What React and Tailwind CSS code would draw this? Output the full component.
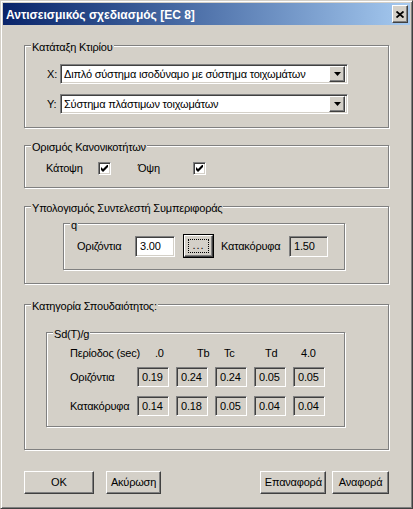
import React from 'react'

const sunken =
  'border border-t-[#808080] border-l-[#808080] border-b-white border-r-white shadow-[inset_1px_1px_0_#404040,inset_-1px_-1px_0_#d4d0c8]'
const raised =
  'border border-t-white border-l-white border-b-[#404040] border-r-[#404040] shadow-[inset_-1px_-1px_0_#808080]'

function GroupBox({ label, className = '', children }) {
  return (
    <div className={`relative border border-[#808080] shadow-[inset_1px_1px_0_#fff,1px_1px_0_#fff] ${className}`}>
      <span className="absolute -top-[5px] left-[6px] px-[1px] bg-[#d4d0c8] leading-[13px] whitespace-nowrap">
        {label}
      </span>
      {children}
    </div>
  )
}

function Combo({ value }) {
  return (
    <div className={`w-[288px] h-[20px] bg-white flex items-center justify-between p-[2px] ${sunken}`}>
      <span className="pl-[1px] leading-[13px] whitespace-nowrap">{value}</span>
      <div className={`w-[16px] h-[16px] bg-[#d4d0c8] flex items-center justify-center ${raised}`}>
        <svg width="7" height="4" viewBox="0 0 7 4">
          <path d="M0 0h7L3.5 4z" fill="#000" />
        </svg>
      </div>
    </div>
  )
}

function CheckBox() {
  return (
    <div className={`w-[13px] h-[13px] bg-white flex items-center justify-center ${sunken}`}>
      <svg width="7" height="7" viewBox="0 0 7 7">
        <path d="M0 2v3l2 2 5-5V-1L2 4z" fill="#000" />
      </svg>
    </div>
  )
}

function Field({ value, readOnly, className = '' }) {
  return (
    <div
      className={`h-[21px] flex items-center pl-[4px] leading-[13px] ${readOnly ? 'bg-[#d4d0c8]' : 'bg-white'} ${sunken} ${className}`}
    >
      {value}
    </div>
  )
}

function Button({ label, className = '' }) {
  return (
    <div className={`h-[23px] bg-[#d4d0c8] flex items-center justify-center leading-[13px] ${raised} ${className}`}>
      {label}
    </div>
  )
}

const cols = [
  { head: '.0', pad: 'pl-[18px]' },
  { head: 'Tb', pad: 'pl-[21px]' },
  { head: 'Tc', pad: 'pl-[9px]' },
  { head: 'Td', pad: 'pl-[11px]' },
  { head: '4.0', pad: 'pl-[8px]' },
]

const rows = [
  { label: 'Οριζόντια', values: ['0.19', '0.24', '0.24', '0.05', '0.05'] },
  { label: 'Κατακόρυφα', values: ['0.14', '0.18', '0.05', '0.04', '0.04'] },
]

export default function App() {
  return (
    <div className="w-[413px] h-[509px] bg-[#d4d0c8] text-black text-[11px] tracking-[-0.2px] font-['Liberation_Sans',Arial,sans-serif] border border-t-[#d4d0c8] border-l-[#d4d0c8] border-b-[#404040] border-r-[#404040] shadow-[inset_1px_1px_0_#fff,inset_-1px_-1px_0_#808080] p-[2px]">
      {/* caption */}
      <div className="h-[22px] flex items-center justify-between bg-linear-to-r from-[#0a246a] to-[#a6caf0] pl-[3px] pr-[2px]">
        <span className="text-white font-bold text-[12px] tracking-normal leading-[14px] pt-[1px]">
          Αντισεισμικός σχεδιασμός [EC 8]
        </span>
        <div className={`w-[16px] h-[18px] bg-[#d4d0c8] flex items-center justify-center ${raised}`}>
          <svg width="8" height="7" viewBox="0 0 8 7">
            <path d="M0.5 0.5l7 6M7.5 0.5l-7 6" stroke="#000" strokeWidth="1.8" />
          </svg>
        </div>
      </div>

      <div className="px-[21px]">
        <GroupBox label="Κατάταξη Κτιρίου" className="mt-[20px] w-[365px] h-[83px]">
          <div className="flex items-center mt-[18px]">
            <span className="w-[35px] pl-[22px] leading-[13px]">X:</span>
            <Combo value="Διπλό σύστημα ισοδύναμο με σύστημα τοιχωμάτων" />
          </div>
          <div className="flex items-center mt-[10px]">
            <span className="w-[35px] pl-[22px] leading-[13px]">Y:</span>
            <Combo value="Σύστημα πλάστιμων τοιχωμάτων" />
          </div>
        </GroupBox>

        <GroupBox label="Ορισμός Κανονικοτήτων" className="mt-[17px] w-[365px] h-[43px]">
          <div className="flex items-center mt-[16px] pl-[21px]">
            <span className="w-[52px] leading-[13px]">Κάτοψη</span>
            <CheckBox />
            <span className="ml-[27px] w-[55px] leading-[13px]">Όψη</span>
            <CheckBox />
          </div>
        </GroupBox>

        <GroupBox label="Υπολογισμός Συντελεστή Συμπεριφοράς" className="mt-[18px] w-[365px] h-[78px]">
          <GroupBox label="q" className="mt-[16px] ml-[38px] w-[282px] h-[47px]">
            <div className="flex items-center mt-[10px] pl-[13px] h-[24px]">
              <span className="w-[58px] leading-[13px]">Οριζόντια</span>
              <Field value="3.00" className="w-[40px]" />
              <div className="ml-[8px] w-[31px] h-[24px] border border-black">
                <div className={`w-full h-full bg-[#d4d0c8] p-[3px] ${raised}`}>
                  <div className="w-full h-full border border-dotted border-black flex items-end justify-center leading-[13px] tracking-[1px]">
                    ...
                  </div>
                </div>
              </div>
              <span className="ml-[7px] w-[68px] leading-[13px]">Κατακόρυφα</span>
              <Field value="1.50" readOnly className="w-[39px]" />
            </div>
          </GroupBox>
        </GroupBox>

        <GroupBox label="Κατηγορία Σπουδαιότητος:" className="mt-[20px] w-[365px] h-[146px]">
          <GroupBox label="Sd(T)/g" className="mt-[27px] ml-[21px] w-[299px] h-[95px]">
            <div className="flex items-center mt-[12px] h-[16px]">
              <span className="w-[90px] pl-[23px] leading-[13px] whitespace-nowrap">Περίοδος (sec)</span>
              <div className="flex gap-[7px]">
                {cols.map(c => (
                  <span key={c.head} className={`w-[32px] leading-[13px] ${c.pad}`}>
                    {c.head}
                  </span>
                ))}
              </div>
            </div>
            {rows.map((r, i) => (
              <div key={r.label} className={`flex items-center h-[20px] ${i === 0 ? 'mt-[6px]' : 'mt-[9px]'}`}>
                <span className="w-[90px] pl-[23px] leading-[13px] whitespace-nowrap">{r.label}</span>
                <div className="flex gap-[7px]">
                  {r.values.map((v, j) => (
                    <Field key={j} value={v} readOnly className="w-[32px] !h-[20px]" />
                  ))}
                </div>
              </div>
            ))}
          </GroupBox>
        </GroupBox>

        <div className="flex mt-[21px]">
          <Button label="OK" className="w-[71px]" />
          <Button label="Ακύρωση" className="ml-[12px] w-[57px]" />
          <Button label="Επαναφορά" className="ml-[99px] w-[67px]" />
          <Button label="Αναφορά" className="ml-[6px] w-[58px]" />
        </div>
      </div>
    </div>
  )
}
